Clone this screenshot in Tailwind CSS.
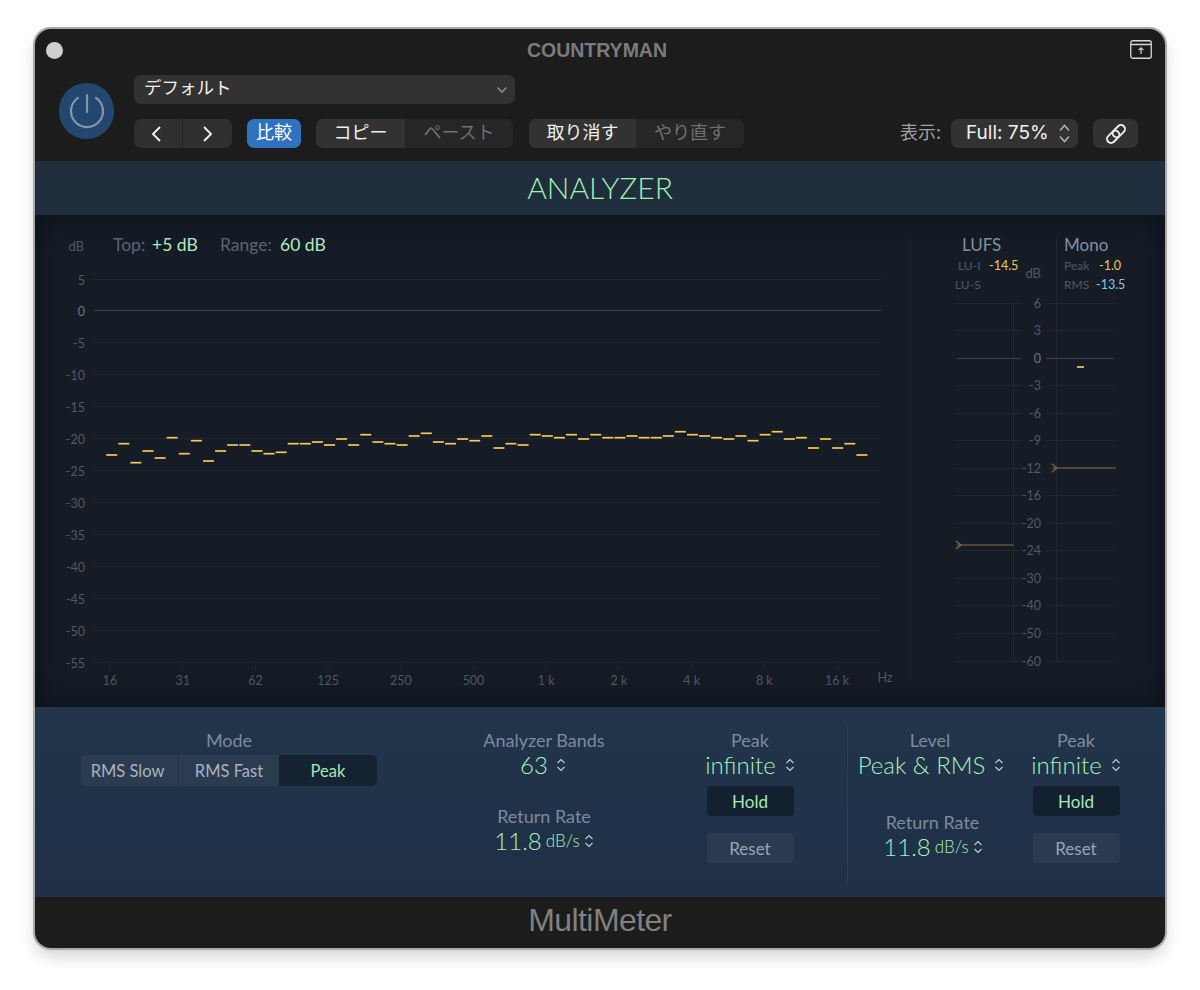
<!DOCTYPE html>
<html lang="ja">

<head>
    <meta charset="UTF-8">
    <title>MultiMeter</title>
    <script src="https://cdn.jsdelivr.net/npm/@tailwindcss/browser@4"></script>
</head>

<body class="bg-white h-[990px] overflow-hidden [font-family:Lato,sans-serif]">
    <div class="ml-[35px] mt-[29px] absolute w-[1130px] h-[919px] rounded-[16px] overflow-hidden bg-[#1c1c1c] ring-2 ring-[#a8a8a8] shadow-[0_8px_16px_rgba(0,0,0,0.18)]">

        <!-- top bar -->
        <div class="h-[132px] [font-family:'Noto_Sans_CJK_JP',sans-serif]">
            <div class="h-[46px] flex items-center justify-between pl-[11px] pr-[13px]">
                <div class="w-[17px] h-[17px] rounded-full bg-[#cfcfcf] -mt-[4px]"></div>
                <div class="ml-[1px] -mt-[4px] text-[19.5px] leading-[22px] font-bold text-[#7b7b7b] [font-family:'Liberation_Sans',sans-serif]">COUNTRYMAN</div>
                <svg width="22" height="19" viewBox="0 0 22 19" class="-mt-[6px]" fill="none" stroke="#d8d8d8">
                    <rect x="0.75" y="0.75" width="20.5" height="17.5" rx="2" stroke-width="1.3" />
                    <path d="M1 4.5H21" stroke-width="1.3" />
                    <path d="M11 14V8M8.6 10.2L11 7.8L13.4 10.2" stroke-width="1.2" />
                </svg>
            </div>
            <div class="flex items-center pl-[24px]">
                <div class="w-[55px] h-[56px] -mt-[1px] rounded-full bg-[#24476f] flex items-center justify-center shrink-0">
                    <svg width="36" height="36" viewBox="0 0 36 36" fill="none" stroke="#8197aa" stroke-width="2.2" stroke-linecap="round">
                        <path d="M18 2V19" />
                        <path d="M9 4.8A16 16 0 1 0 27 4.8" />
                    </svg>
                </div>
                <div class="ml-[20px] w-[1004px]">
                    <div class="w-[381px] h-[29px] rounded-[7px] bg-[#323232] flex items-center justify-between pl-[10px] pr-[6px] text-[#f0f0f0] text-[17.5px]">
                        <span class="-mt-[4px]">デフォルト</span>
                        <svg width="14" height="10" viewBox="0 0 14 10" fill="none" stroke="#8c8c8c" stroke-width="1.6">
                            <path d="M2.5 2.5L7 7L11.5 2.5" />
                        </svg>
                    </div>
                    <div class="mt-[15px] flex items-center h-[29px] text-[18px]">
                        <div class="w-[98px] h-full rounded-[7px] bg-[#2f2f2f] flex">
                            <div class="w-[49px] flex items-center justify-center pr-[4px] border-r border-[#232323]">
                                <svg width="12" height="18" viewBox="0 0 12 18" fill="none" stroke="#f0f0f0" stroke-width="1.9"><path d="M10 2L3 9L10 16" /></svg>
                            </div>
                            <div class="flex-1 flex items-center justify-center">
                                <svg width="12" height="18" viewBox="0 0 12 18" fill="none" stroke="#f0f0f0" stroke-width="1.9"><path d="M2 2L9 9L2 16" /></svg>
                            </div>
                        </div>
                        <div class="ml-[15px] w-[54px] h-full rounded-[7px] bg-[#2f72bd] text-white flex items-center justify-center pb-[4px]">比較</div>
                        <div class="ml-[15px] w-[197px] h-full rounded-[7px] bg-[#262626] flex">
                            <div class="w-[89px] rounded-l-[7px] bg-[#323232] text-[#f0f0f0] flex items-center justify-center pb-[4px]">コピー</div>
                            <div class="flex-1 text-[#707070] flex items-center justify-center pb-[4px]">ペースト</div>
                        </div>
                        <div class="ml-[16px] w-[215px] h-full rounded-[7px] bg-[#262626] flex">
                            <div class="w-[107px] rounded-l-[7px] bg-[#323232] text-[#f0f0f0] flex items-center justify-center pb-[4px]">取り消す</div>
                            <div class="flex-1 text-[#707070] flex items-center justify-center pb-[4px]">やり直す</div>
                        </div>
                        <div class="ml-auto text-[#a0a0a0] -mt-[4px]">表示:</div>
                        <div class="ml-[10px] w-[127px] h-full rounded-[7px] bg-[#323232] text-[#f0f0f0] flex items-center justify-between pl-[15px] pr-[7px] text-[19px] [font-family:Inter,sans-serif]">
                            <span>Full: 75%</span>
                            <svg width="13" height="21" viewBox="0 0 13 21" fill="none" stroke="#b0b0b0" stroke-width="1.6"><path d="M2 7.5L6.5 2.5L11 7.5M2 13.5L6.5 18.5L11 13.5" /></svg>
                        </div>
                        <div class="ml-[15px] w-[45px] h-full rounded-[7px] bg-[#323232] flex items-center justify-center">
                            <svg width="26" height="26" viewBox="0 0 26 26" fill="none" stroke="#f0f0f0" stroke-width="1.9">
                                <rect x="2" y="9" width="14" height="8" rx="4" transform="rotate(-45 13 13)" />
                                <rect x="10" y="9" width="14" height="8" rx="4" transform="rotate(-45 13 13)" />
                            </svg>
                        </div>
                    </div>
                </div>
            </div>
        </div>

        <!-- analyzer header -->
        <div class="h-[54px] pb-[2px] bg-[#1f2d3d] flex items-center justify-center text-[30px] font-light text-[#9cf2b0]">ANALYZER</div>

        <!-- display -->
        <div class="h-[492px] relative bg-[#151c26]">
            <svg id="display" width="1130" height="492" viewBox="35 215 1130 492" class="block"></svg>
            <div class="absolute inset-0 shadow-[inset_0_0_30px_rgba(6,10,16,0.7)]"></div>
        </div>

        <!-- controls -->
        <div class="h-[190px] flex pt-[24px] text-center text-[18px] leading-[18px] text-[#7d8b9d] bg-linear-to-b from-[#21354b] to-[#1f3047]">
            <div class="ml-[46px] w-[296px]">
                <div>Mode</div>
                <div class="mt-[6px] h-[31px] flex rounded-[5px] overflow-hidden bg-[#2c3c50] text-[16.5px] text-[#a9b3bf]">
                    <div class="w-[98px] pr-[4px] flex items-center justify-center border-r border-[#233244]">RMS Slow</div>
                    <div class="w-[100px] flex items-center justify-center">RMS Fast</div>
                    <div class="flex-1 bg-[#152231] text-[#a5e8b5] flex items-center justify-center">Peak</div>
                </div>
            </div>
            <div class="ml-[87px] w-[160px]">
                <div class="mb-[2px]">Analyzer Bands</div>
                <div class="h-[28px] pr-[2px] flex items-center justify-center gap-[8px] text-[24px] font-light text-[#aaf0bd]">
                    <span>63</span>
                    <svg width="10" height="14" viewBox="0 0 10 14" fill="none" stroke="#b9d8c6" stroke-width="1.1"><path d="M1.5 5L5 1.5L8.5 5M1.5 9L5 12.5L8.5 9" /></svg>
                </div>
                <div class="mt-[28px] mb-[2px]">Return Rate</div>
                <div class="h-[28px] flex items-center justify-center gap-[4px] text-[24px] font-light text-[#aaf0bd]">
                    <span>11.8</span><span class="text-[17px]">dB/s</span>
                    <svg width="10" height="14" viewBox="0 0 10 14" fill="none" stroke="#b9d8c6" stroke-width="1.1"><path d="M1.5 5L5 1.5L8.5 5M1.5 9L5 12.5L8.5 9" /></svg>
                </div>
            </div>
            <div class="ml-[66px] w-[120px]">
                <div class="mb-[2px]">Peak</div>
                <div class="h-[28px] flex items-center justify-center gap-[9px] text-[24px] font-light text-[#aaf0bd]">
                    <span>infinite</span>
                    <svg width="10" height="14" viewBox="0 0 10 14" fill="none" stroke="#b9d8c6" stroke-width="1.1"><path d="M1.5 5L5 1.5L8.5 5M1.5 9L5 12.5L8.5 9" /></svg>
                </div>
                <div class="mx-auto mt-[7px] pt-[1px] w-[87px] h-[30px] rounded-[4px] bg-[#132030] text-[17px] text-[#a5e8b5] flex items-center justify-center">Hold</div>
                <div class="mx-auto mt-[17px] pt-[1px] w-[87px] h-[30px] rounded-[4px] bg-[#2b3b4f] text-[17px] text-[#9aa5b2] flex items-center justify-center">Reset</div>
            </div>
            <div class="ml-[37px] w-px h-[160px] -mt-[6px] bg-[#2c3e54]"></div>
            <div class="ml-[3px] w-[160px]">
                <div class="-ml-[2px] mb-[2px]">Level</div>
                <div class="h-[28px] flex items-center justify-center gap-[9px] text-[24px] font-light text-[#aaf0bd] whitespace-nowrap">
                    <span>Peak &amp; RMS</span>
                    <svg width="10" height="14" viewBox="0 0 10 14" fill="none" stroke="#b9d8c6" stroke-width="1.1" class="shrink-0"><path d="M1.5 5L5 1.5L8.5 5M1.5 9L5 12.5L8.5 9" /></svg>
                </div>
                <div class="mt-[34px] mb-[2px] ml-[3px]">Return Rate</div>
                <div class="h-[28px] pl-[4px] flex items-center justify-center gap-[4px] text-[24px] font-light text-[#aaf0bd]">
                    <span>11.8</span><span class="text-[17px]">dB/s</span>
                    <svg width="10" height="14" viewBox="0 0 10 14" fill="none" stroke="#b9d8c6" stroke-width="1.1"><path d="M1.5 5L5 1.5L8.5 5M1.5 9L5 12.5L8.5 9" /></svg>
                </div>
            </div>
            <div class="ml-[5px] w-[120px]">
                <div class="mb-[2px]">Peak</div>
                <div class="h-[28px] flex items-center justify-center gap-[9px] text-[24px] font-light text-[#aaf0bd]">
                    <span>infinite</span>
                    <svg width="10" height="14" viewBox="0 0 10 14" fill="none" stroke="#b9d8c6" stroke-width="1.1"><path d="M1.5 5L5 1.5L8.5 5M1.5 9L5 12.5L8.5 9" /></svg>
                </div>
                <div class="mx-auto mt-[7px] pt-[1px] w-[87px] h-[30px] rounded-[4px] bg-[#132030] text-[17px] text-[#a5e8b5] flex items-center justify-center">Hold</div>
                <div class="mx-auto mt-[17px] pt-[1px] w-[87px] h-[30px] rounded-[4px] bg-[#2b3b4f] text-[17px] text-[#9aa5b2] flex items-center justify-center">Reset</div>
            </div>
        </div>

        <!-- footer -->
        <div class="h-[51px] pb-[6px] flex items-center justify-center text-[32px] tracking-[-0.6px] text-[#808080] [font-family:'Liberation_Sans',sans-serif]">MultiMeter</div>
    </div>

    <script>
        const svg = document.getElementById('display');
        const NS = 'http://www.w3.org/2000/svg';

        function line(x1, y1, x2, y2, color, width) {
            const l = document.createElementNS(NS, 'line');
            l.setAttribute('x1', x1); l.setAttribute('y1', y1);
            l.setAttribute('x2', x2); l.setAttribute('y2', y2);
            l.setAttribute('stroke', color);
            l.setAttribute('stroke-width', width || 1);
            svg.appendChild(l);
        }

        function text(x, y, str, color, size, anchor) {
            const t = document.createElementNS(NS, 'text');
            t.setAttribute('x', x); t.setAttribute('y', y);
            t.setAttribute('fill', color);
            t.setAttribute('font-size', size);
            t.setAttribute('text-anchor', anchor || 'start');
            t.setAttribute('dominant-baseline', 'central');
            t.textContent = str;
            svg.appendChild(t);
        }

        const grid = '#1f2731', label = '#4f5a67';

        // main spectrum grid
        text(84, 245.5, 'dB', label, 13, 'end');
        for (let i = 0; i < 13; i++) {
            const y = Math.round(278.5 + i * 31.92) + 0.5;
            const db = 5 - i * 5;
            text(85, y + 0.5, String(db), db === 0 ? '#6d7681' : label, 12.5, 'end');
            line(94, y, 881, y, db === 0 ? '#3a424d' : grid);
        }

        ['16', '31', '62', '125', '250', '500', '1 k', '2 k', '4 k', '8 k', '16 k'].forEach(function (f, i) {
            const x = 110 + i * 72.7;
            line(x, 662, x, 669, grid);
            text(x, 680, f, label, 12.5, 'middle');
        });
        text(885, 677, 'Hz', label, 12.5, 'middle');

        // readouts
        text(113, 244.5, 'Top:', '#5b6673', 17.5);
        text(152, 244.5, '+5 dB', '#b5ecc0', 17.5);
        text(220, 244.5, 'Range:', '#5b6673', 17.5);
        text(280, 244.5, '60 dB', '#b5ecc0', 17.5);

        // analyzer bands
        const bands = [455, 443.7, 462.7, 451, 458, 437.7, 453.7, 440.7, 461, 451, 445, 445, 451, 453.7, 452.3, 443.7,
            443.7, 442, 445, 439, 445, 434.7, 442, 443.7, 445, 436, 433.3, 442, 443.7, 439, 440.7, 436,
            448, 443.7, 445, 434.7, 436, 437.7, 434.7, 439, 434.7, 437.7, 437.7, 436, 437.7, 437.7, 436,
            431.7, 434.7, 436, 437.7, 439, 436, 440.7, 434.7, 431.7, 439, 437.7, 448, 439, 448, 443.7, 455];
        bands.forEach(function (y, i) {
            const x = 111.7 + i * 12.1;
            line(x - 5.5, y, x + 5.5, y, '#f5ca55', 1.7);
        });

        // level meters
        line(910, 238, 910, 682, '#1c242e');
        line(1013.5, 302, 1013.5, 661, '#1f2731');
        line(1056.5, 238, 1056.5, 661, '#1f2731');

        ['6', '3', '0', '-3', '-6', '-9', '-12', '-16', '-20', '-24', '-30', '-40', '-50', '-60'].forEach(function (db, i) {
            const y = Math.round(302.5 + i * 27.54) + 0.5;
            const c = db === '0' ? '#3a424d' : grid;
            line(957, y, 1021, y, c);
            line(1046, y, 1114, y, c);
            text(1041, y, db, db === '0' ? '#6d7681' : label, 12.5, 'end');
        });
        text(1041, 272.5, 'dB', label, 13, 'end');

        text(962, 244.5, 'LUFS', '#8493a3', 17);
        text(1064, 244.5, 'Mono', '#8493a3', 17);
        text(958, 265.5, 'LU-I', label, 12);
        text(989, 265.5, '-14.5', '#f0c94f', 12.5);
        text(955, 284.5, 'LU-S', label, 12);
        text(1064, 265.5, 'Peak', label, 12);
        text(1099, 265.5, '-1.0', '#f0c94f', 12.5);
        text(1064, 284.5, 'RMS', label, 12);
        text(1096, 284.5, '-13.5', '#8cc5e6', 12.5);

        // meter markers
        line(957, 545, 1014, 545, '#5f5433', 1.4);
        line(1053, 468, 1116, 468, '#5f5433', 1.4);
        [[956, 545], [1052, 468]].forEach(function (m) {
            const p = document.createElementNS(NS, 'path');
            p.setAttribute('d', 'M' + m[0] + ' ' + (m[1] - 4) + 'L' + (m[0] + 5) + ' ' + m[1] + 'L' + m[0] + ' ' + (m[1] + 4));
            p.setAttribute('fill', 'none');
            p.setAttribute('stroke', '#7a6a3e');
            p.setAttribute('stroke-width', '1.3');
            svg.appendChild(p);
        });
        line(1077, 367, 1084, 367, '#f5ca55', 1.7);
    </script>
</body>

</html>
